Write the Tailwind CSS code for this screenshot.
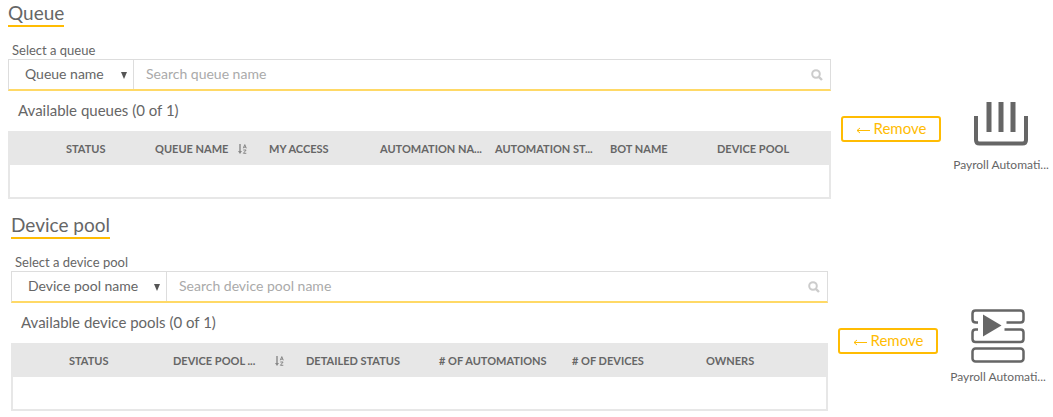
<!DOCTYPE html>
<html lang="en">
<head>
<meta charset="utf-8">
<title>Queue and device pool</title>
<script src="https://cdn.jsdelivr.net/npm/@tailwindcss/browser@4"></script>
</head>
<body class="bg-white font-['Lato','Open_Sans',sans-serif] text-[#666]">
<svg class="hidden">
  <symbol id="search" viewBox="0 0 12 12"><circle cx="5" cy="5" r="3.8" fill="none" stroke="currentColor" stroke-width="2"/><path d="M7.8 7.8 11 11" stroke="currentColor" stroke-width="2.4" fill="none"/></symbol>
  <symbol id="sort" viewBox="0 0 9 10"><path d="M2 0v8" stroke="currentColor" stroke-width="1.4"/><path d="M0 7h4L2 10z" fill="currentColor"/><path d="M5.3 4.3 6.8.6 8.3 4.3M5.8 3.2h2M5.3 6h2.8L5.4 9.3h2.9" fill="none" stroke="currentColor" stroke-width="1"/></symbol>
</svg>
<main class="flex flex-col gap-[13px]">
  <section class="pl-2 pr-[3px]">
    <h2 class="mt-0.5 inline-block border-b-2 border-[#ffbc03] pb-0.5 text-[19px] leading-[21px]">Queue</h2>
    <label for="queue-field" class="mt-[15px] block pl-1 text-[13px] leading-[17px]">Select a queue</label>
    <div class="flex items-center">
      <div class="min-w-0 flex-1">
        <div class="flex h-8 border border-b-2 border-[#ddd] border-b-[#ffd966]">
          <div class="relative w-[125px] shrink-0 border-r border-[#ddd]">
            <select id="queue-field" class="h-full w-full appearance-none bg-transparent pb-0.5 pl-4 text-[14px] outline-none"><option>Queue name</option></select>
            <svg class="pointer-events-none absolute right-1.5 top-3 h-[7px] w-[6px]" viewBox="0 0 6 7"><path d="M0 0h6L3 7z" fill="#555"/></svg>
          </div>
          <input type="search" aria-label="Search queue name" placeholder="Search queue name" class="min-w-0 flex-1 px-3 pb-0.5 text-[14px] outline-none placeholder:text-[#aaa]">
          <button type="button" aria-label="Search" class="shrink-0 px-[7px] text-[#ccc]"><svg class="size-3"><use href="#search"/></svg></button>
        </div>
        <p class="pb-0.5 pl-2.5 text-[15px] leading-[38px]">Available queues (0 of 1)</p>
        <table class="w-full table-fixed border-separate border-spacing-0 border-2 border-t-0 border-[#e7e7e7] text-left text-[11px]">
          <colgroup><col class="w-[56px]"><col class="w-[89px]"><col class="w-[114px]"><col class="w-[111px]"><col class="w-[115px]"><col class="w-[115px]"><col class="w-[107px]"><col class="w-[112px]"></colgroup>
          <thead class="bg-[#e7e7e7]"><tr class="h-[34px] whitespace-nowrap *:pt-0.5">
            <td></td><th scope="col">STATUS</th>
            <th scope="col"><span class="flex items-center justify-between pr-[22px]">QUEUE NAME<svg class="h-[10px] w-[9px] text-[#888]"><use href="#sort"/></svg></span></th>
            <th scope="col">MY ACCESS</th><th scope="col">AUTOMATION NA...</th><th scope="col">AUTOMATION ST...</th><th scope="col">BOT NAME</th><th scope="col">DEVICE POOL</th>
          </tr></thead>
          <tbody><tr class="h-8"><td colspan="8"></td></tr></tbody>
        </table>
      </div>
      <button type="button" class="ml-2.5 flex h-[26px] w-[100px] shrink-0 items-center justify-center gap-1 rounded-[3px] border-2 border-[#ffbc03] pb-0.5 text-[15px] text-[#ffbc03]"><svg class="mt-1 h-[7px] w-[14px]" viewBox="0 0 14 7"><path d="M14 3.5H1M4 1 1 3.5 4 6" fill="none" stroke="currentColor"/></svg>Remove</button>
      <figure class="ml-[11px] flex w-[98px] shrink-0 flex-col items-center pt-[17px]">
        <svg class="h-[44px] w-[54px]" viewBox="0 0 54 44"><path d="M2 14V38Q2 41.5 5.500 41.500H48.500Q52 41.500 52 38V14" fill="none" stroke="#666" stroke-width="4"/><path d="M15 0v30M27 0v30M39 0v30" stroke="#666" stroke-width="5"/></svg>
        <figcaption class="mt-[11px] whitespace-nowrap text-[12px] leading-4">Payroll Automati...</figcaption>
      </figure>
    </div>
  </section>

  <section class="pl-[11px] pr-1.5">
    <h2 class="mt-0.5 inline-block border-b-2 border-[#ffbc03] pb-0.5 text-[19px] leading-[21px]">Device pool</h2>
    <label for="pool-field" class="mt-[15px] block pl-1 text-[13px] leading-[17px]">Select a device pool</label>
    <div class="flex items-center">
      <div class="min-w-0 flex-1">
        <div class="flex h-8 border border-b-2 border-[#ddd] border-b-[#ffd966]">
          <div class="relative w-[155px] shrink-0 border-r border-[#ddd]">
            <select id="pool-field" class="h-full w-full appearance-none bg-transparent pb-0.5 pl-4 text-[14px] outline-none"><option>Device pool name</option></select>
            <svg class="pointer-events-none absolute right-1.5 top-3 h-[7px] w-[6px]" viewBox="0 0 6 7"><path d="M0 0h6L3 7z" fill="#555"/></svg>
          </div>
          <input type="search" aria-label="Search device pool name" placeholder="Search device pool name" class="min-w-0 flex-1 px-3 pb-0.5 text-[14px] outline-none placeholder:text-[#aaa]">
          <button type="button" aria-label="Search" class="shrink-0 px-[7px] text-[#ccc]"><svg class="size-3"><use href="#search"/></svg></button>
        </div>
        <p class="pb-0.5 pl-2.5 text-[15px] leading-[38px]">Available device pools (0 of 1)</p>
        <table class="w-full table-fixed border-separate border-spacing-0 border-2 border-t-0 border-[#e7e7e7] text-left text-[11px]">
          <colgroup><col class="w-[56px]"><col class="w-[104px]"><col class="w-[133px]"><col class="w-[133px]"><col class="w-[133px]"><col class="w-[134px]"><col class="w-[120px]"></colgroup>
          <thead class="bg-[#e7e7e7]"><tr class="h-[34px] whitespace-nowrap *:pt-0.5">
            <td></td><th scope="col">STATUS</th>
            <th scope="col"><span class="flex items-center justify-between pr-[22px]">DEVICE POOL ...<svg class="h-[10px] w-[9px] text-[#888]"><use href="#sort"/></svg></span></th>
            <th scope="col">DETAILED STATUS</th><th scope="col"># OF AUTOMATIONS</th><th scope="col"># OF DEVICES</th><th scope="col">OWNERS</th>
          </tr></thead>
          <tbody><tr class="h-8"><td colspan="7"></td></tr></tbody>
        </table>
      </div>
      <button type="button" class="ml-2.5 flex h-[26px] w-[100px] shrink-0 items-center justify-center gap-1 rounded-[3px] border-2 border-[#ffbc03] pb-0.5 text-[15px] text-[#ffbc03]"><svg class="mt-1 h-[7px] w-[14px]" viewBox="0 0 14 7"><path d="M14 3.5H1M4 1 1 3.5 4 6" fill="none" stroke="currentColor"/></svg>Remove</button>
      <figure class="ml-[11px] flex w-[98px] shrink-0 flex-col items-center pt-3">
        <svg class="size-[54px]" viewBox="0 0 54 54"><g fill="none" stroke="#666" stroke-width="2.500"><path d="M7 13.500H5Q1.500 13.500 1.500 10.500V4.500Q1.500 1.500 4.500 1.500H49.500Q52.500 1.500 52.500 4.500V10.500Q52.500 13.500 49.500 13.500H35.500M7 20.500H4.500Q1.500 20.500 1.500 23.500V30Q1.500 33 4.500 33H49.500Q52.500 33 52.500 30V23.500Q52.500 20.500 49.500 20.500H33.500"/><rect x="1.500" y="39.500" width="51" height="13" rx="3"/></g><path d="M12 5.500 30.500 16.500 12 27.500z" fill="#666"/></svg>
        <figcaption class="mt-[6px] whitespace-nowrap text-[12px] leading-4">Payroll Automati...</figcaption>
      </figure>
    </div>
  </section>
</main>
</body>
</html>
